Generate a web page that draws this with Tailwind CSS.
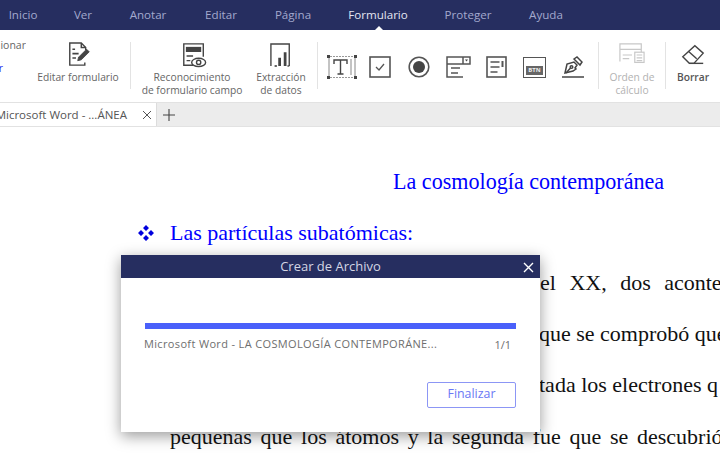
<!DOCTYPE html>
<html lang="es">
<head>
<meta charset="utf-8">
<script src="https://cdn.jsdelivr.net/npm/@tailwindcss/browser@4"></script>
</head>
<body class="w-[720px] h-[455px] overflow-hidden bg-white relative font-['Open_Sans',sans-serif]">
<header class="h-[30px] bg-[#262e60] flex items-center text-[11.6px] text-[#a3a9ce] relative">
  <span class="w-[46px] text-center">Inicio</span>
  <span class="w-[74px] text-center">Ver</span>
  <span class="w-[56px] text-center">Anotar</span>
  <span class="w-[90px] text-center">Editar</span>
  <span class="w-[54px] text-center">Página</span>
  <span class="w-[116px] text-center text-[#e4e6f2]">Formulario</span>
  <span class="w-[64px] text-center">Proteger</span>
  <span class="w-[92px] text-center">Ayuda</span>
  <span class="absolute left-[375px] bottom-0 w-0 h-0 border-x-[4px] border-x-transparent border-b-[4px] border-b-white"></span>
</header>

<div class="h-[72px] bg-white flex items-start text-[10.25px] leading-[13px] text-[#666] relative">
  <div class="w-[26px] h-full overflow-hidden relative shrink-0">
    <span class="absolute right-0 top-[9px] text-[10.5px]">ionar</span>
    <span class="absolute right-[23px] top-[32px] text-[#2b2bf0]">r</span>
  </div>
  <div class="w-[104px] h-full flex flex-col items-center pt-[12px]">
    <svg width="23" height="25" viewBox="0 0 26 28" fill="none" stroke="#444" stroke-width="1.6" class="ml-[2px]">
      <path d="M20 9V6l-5-5H2v25h17v-3"/><path d="M15 1v5h5"/><path d="M5 8h3M5 13h7M5 18h4" stroke-width="1.8"/>
      <path d="M11 21l1-4 9-9 3 3-9 9z" fill="#444" stroke-width="1"/>
    </svg>
    <span class="mt-[4px]">Editar formulario</span>
  </div>
  <div class="w-px h-[47px] bg-[#e3e3e3] mt-[12px]"></div>
  <div class="w-[122px] h-full flex flex-col items-center pt-[12px] text-center">
    <svg width="26" height="26" viewBox="0 0 26 28" fill="none" stroke="#444" stroke-width="1.5" class="ml-[4px]">
      <path d="M12 25H2V2h21v14"/><rect x="5" y="6" width="15" height="4" fill="#444"/><path d="M5 15h7M5 20h4"/>
      <ellipse cx="18" cy="22" rx="7.5" ry="4.5" fill="#fff"/><circle cx="18" cy="22" r="2.3"/>
    </svg>
    <span class="mt-[3px]">Reconocimiento<br>de formulario campo</span>
  </div>
  <div class="w-[56px] h-full flex flex-col items-center pt-[12px] text-center">
    <svg width="22" height="26" viewBox="0 0 24 28" fill="none" stroke="#444" stroke-width="1.5">
      <path d="M1 26V2h20v24"/><path d="M5 26h2.5" stroke-width="1.8"/><rect x="9" y="17" width="3" height="9" fill="#444" stroke="none"/><rect x="15" y="11" width="3" height="15" fill="#444" stroke="none"/><path d="M19 26h2"/>
    </svg>
    <span class="mt-[3px]">Extracción<br>de datos</span>
  </div>
  <div class="w-px h-[47px] bg-[#e3e3e3] mt-[12px] ml-[8px]"></div>
  <div class="flex items-center h-[30px] mt-[22px] ml-[9px]">
    <svg width="30" height="24" viewBox="0 0 30 24" fill="none" stroke="#444" class="mr-[12px] -mt-[1px]">
      <path d="M3 1.500h24M3 22.500h24" stroke="#999" stroke-width="1" stroke-dasharray="2 1"/>
      <path d="M2 3v18M28 3v18M24 4v16" stroke="#888" stroke-width="1"/>
      <rect x="0.5" y="0.5" width="2" height="2" fill="#444"/><rect x="27.5" y="0.5" width="2" height="2" fill="#444"/><rect x="0.5" y="21.5" width="2" height="2" fill="#444"/><rect x="27.5" y="21.5" width="2" height="2" fill="#444"/>
      <path d="M7 9V5h13v4M13.500 5v14M10.500 19h6" stroke-width="1.400"/>
    </svg>
    <svg width="22" height="22" viewBox="0 0 22 22" fill="none" stroke="#555" stroke-width="1.6" class="mr-[17px]">
      <rect x="1" y="1" width="20" height="20"/><path d="M7 11l3 3 5-6" stroke-width="1.3"/>
    </svg>
    <svg width="22" height="22" viewBox="0 0 22 22" fill="none" stroke="#555" stroke-width="1.6" class="mr-[16px]">
      <circle cx="11" cy="11" r="9.8"/><circle cx="11" cy="11" r="6" fill="#444" stroke="none"/>
    </svg>
    <svg width="25" height="22" viewBox="0 0 25 22" fill="none" stroke="#555" stroke-width="1.5" class="mr-[15px]">
      <path d="M17 21H1V1h23v7H1"/><path d="M17 1v7"/><path d="M19 3.500h3l-1.500 2z" fill="#444" stroke="none"/><path d="M5 12h9M5 17h7"/>
    </svg>
    <svg width="21" height="22" viewBox="0 0 21 22" fill="none" stroke="#555" stroke-width="1.6" class="mr-[16px]">
      <rect x="1" y="1" width="19" height="20"/><path d="M4.500 6h9M4.500 11h9M4.500 16h7"/><path d="M16.500 5v6" stroke-width="2"/>
    </svg>
    <div class="w-[23px] h-[21px] border-[1.6px] border-[#555] mr-[15px] flex items-end p-[2px]">
      <div class="w-full h-[9px] bg-[#666] text-[6px] leading-[9px] font-bold text-[#eee] text-center">BTN</div>
    </div>
    <svg width="24" height="24" viewBox="0 0 24 24" fill="none" stroke="#444" stroke-width="1.5">
      <path d="M4 18l2-9 7-2 3 3-2 3 1 1-3 2z"/><path d="M13 4l6 6 2-3-5-5z"/><path d="M5 18l4.500-5"/><circle cx="10.500" cy="12" r="1.300"/><path d="M1 22h22"/>
    </svg>
  </div>
  <div class="w-px h-[47px] bg-[#e3e3e3] mt-[12px] ml-[13px]"></div>
  <div class="w-[66px] h-full flex flex-col items-center pt-[12px] text-center text-[#b2b2b2]">
    <svg width="28" height="26" viewBox="0 0 28 28" fill="none" stroke="#c8c8c8" stroke-width="1.3">
      <path d="M1 21V2h23v6H1M24 8v3"/><path d="M4 14h10M4 18h7"/><rect x="17" y="11" width="10" height="11"/><path d="M19 14h6M19 17h6M19 20h6"/>
    </svg>
    <span class="mt-[3px]">Orden de<br>cálculo</span>
  </div>
  <div class="w-px h-[47px] bg-[#e3e3e3] mt-[12px]"></div>
  <div class="w-[54px] h-full flex flex-col items-center pt-[12px] font-semibold text-[#555]">
    <svg width="24" height="26" viewBox="0 0 24 28" fill="none" stroke="#444" stroke-width="1.5">
      <path d="M1 16L14 4l9 8-10 11H8z"/><path d="M7 10l9 8"/><path d="M8 23h15"/>
    </svg>
    <span class="mt-[3px]">Borrar</span>
  </div>
</div>

<div class="h-[25px] bg-[#ececec] border-y border-[#e2e2e2] flex items-center text-[11.5px] text-[#555] relative">
  <div class="w-[157px] h-full bg-white flex items-center justify-end border-r border-[#dcdcdc] pr-[4px] overflow-hidden">
    <span class="whitespace-nowrap mr-[15px] mt-[1px]">Microsoft Word - ...ÁNEA</span>
    <svg width="10" height="10" viewBox="0 0 10 10" stroke="#555" stroke-width="1" class="shrink-0"><path d="M1 1l8 8M9 1l-8 8"/></svg>
  </div>
  <svg width="14" height="14" viewBox="0 0 14 14" stroke="#444" stroke-width="1.1" class="ml-[5px]"><path d="M7 1v12M1 7h12"/></svg>
</div>

<main class="font-['Liberation_Serif',serif] text-[#111] relative h-[328px] overflow-hidden">
  <p class="text-[22.1px] leading-[24px] text-[#0000ff] pt-[43px] pl-[393px] whitespace-nowrap">La cosmología contemporánea</p>
  <div class="flex items-center text-[#0000ff] text-[22px] leading-[26px] pl-[138px] mt-[26px] whitespace-nowrap">
    <svg width="16" height="16" viewBox="0 0 16 16" fill="#0000dd" class="mr-[16px]"><path d="M8 0l3 3-3 3-3-3zM3 5l3 3-3 3-3-3zM13 5l3 3-3 3-3-3zM8 10l3 3-3 3-3-3z"/></svg>
    <span>Las partículas subatómicas:</span>
  </div>
  <div class="text-[22px] leading-[24px] whitespace-nowrap pl-[539px] mt-[25px]">
    <p class="-ml-[10px]"><span class="[word-spacing:8px]">del XX, dos acontecimientos</span></p>
    <p class="mt-[27px]">que se comprobó que</p>
    <p class="mt-[27px]">tada los electrones q</p>
    <p class="mt-[28px] -ml-[369px] [word-spacing:3.2px]">pequeñas que los átomos y la segunda fue que se descubrió</p>
  </div>
</main>

<section class="absolute left-[121px] top-[255px] w-[419px] h-[177px] bg-white shadow-[0_4px_14px_rgba(0,0,0,0.4)] flex flex-col">
  <div class="h-[23px] bg-[#262e60] flex items-center justify-center relative text-[13px] text-[#d4d6e4]">
    Crear de Archivo
    <svg width="11" height="11" viewBox="0 0 11 11" stroke="#fff" stroke-width="1.4" class="absolute right-[6px] top-[7px]"><path d="M1 1l9 9M10 1l-9 9"/></svg>
  </div>
  <div class="px-[24px] pt-[45px] flex flex-col flex-1">
    <div class="h-[6px] bg-[#4a60fa]"></div>
    <div class="flex justify-between text-[11px] text-[#6e6e6e] mt-[7px] pr-[5px] -ml-[1px]">
      <span class="tracking-[0.35px]">Microsoft Word - LA COSMOLOGÍA CONTEMPORÁNE...</span>
      <span class="mt-[1px]">1/1</span>
    </div>
    <div class="flex justify-end mt-[28px]">
      <button class="w-[89px] h-[26px] border border-[#8c96f5] rounded-[2px] text-[12.4px] text-[#6a78f5]">Finalizar</button>
    </div>
  </div>
</section>
</body>
</html>
